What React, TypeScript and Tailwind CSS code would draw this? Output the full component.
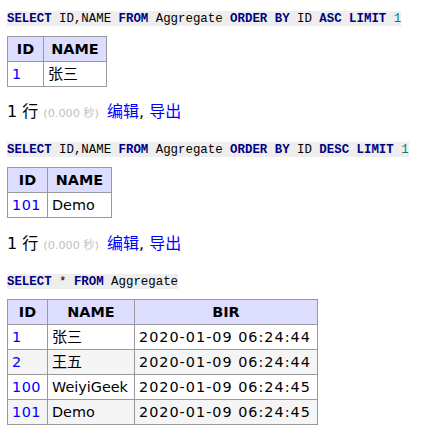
import React from "react";

type Part = [string, "kw" | "num" | ""];

const Sql = ({ parts, className }: { parts: Part[]; className: string }) => (
  <div className={`h-[15px] ${className}`}>
    <code className="inline-block h-[15px] whitespace-pre bg-[#eee] font-['Liberation_Mono',monospace] text-[12.4px] leading-[16px] text-black">
      {parts.map(([text, kind], i) =>
        kind === "kw" ? (
          <span key={i} className="font-bold text-[#000080]">
            {text}
          </span>
        ) : kind === "num" ? (
          <span key={i} className="text-[#007f7f]">
            {text}
          </span>
        ) : (
          <span key={i}>{text}</span>
        )
      )}
    </code>
  </div>
);

const Message = ({ className }: { className: string }) => (
  <p className={`h-[18px] whitespace-nowrap text-[16px] leading-[21px] text-black ${className}`}>
    1 行 <span className="text-[11.2px] text-[#c0c0c0]">(0.000 秒)</span>{" "}
    <a href="#" className="ml-[3px] text-[#00f]">编辑</a>,{" "}
    <a href="#" className="text-[#00f]">导出</a>
  </p>
);

type Cell = { text: string; kind?: "id" | "cjk" | "date" };

const HeadCell = ({ text }: { text: string }) => (
  <div className="h-[25px] border-r border-b border-[#999] bg-[#ddf] px-[4px] py-[3px] text-center font-bold leading-[18px]">
    {text}
  </div>
);

const BodyCell = ({ cell, odd }: { cell: Cell; odd: boolean }) => (
  <div
    className={`h-[25px] whitespace-nowrap border-r border-b border-[#999] px-[4px] py-[3px] leading-[18px] ${
      odd ? "bg-[#f5f5f5]" : "bg-white"
    }`}
  >
    {cell.kind === "id" ? (
      <a href="#" className="tracking-[0.5px] text-[#00f]">
        {cell.text}
      </a>
    ) : cell.kind === "cjk" ? (
      <span className="text-[15px]">{cell.text}</span>
    ) : cell.kind === "date" ? (
      <span className="tracking-[1px]">{cell.text}</span>
    ) : (
      cell.text
    )}
  </div>
);

const Grid = ({
  cols,
  heads,
  rows,
  className,
}: {
  cols: string;
  heads: string[];
  rows: Cell[][];
  className: string;
}) => (
  <div className={`grid w-fit border-l border-t border-[#999] text-[14.4px] text-black ${cols} ${className}`}>
    {heads.map((h) => (
      <HeadCell key={h} text={h} />
    ))}
    {rows.map((row, r) =>
      row.map((cell, c) => <BodyCell key={`${r}-${c}`} cell={cell} odd={r % 2 === 1} />)
    )}
  </div>
);

export default function App() {
  return (
    <div className="h-[436px] w-[424px] bg-white pl-[7px] font-['DejaVu_Sans','Noto_Sans_CJK_SC',sans-serif]">
      <Sql
        className="pt-[5px] box-content"
        parts={[
          ["SELECT", "kw"],
          [" ID,NAME ", ""],
          ["FROM", "kw"],
          [" Aggregate ", ""],
          ["ORDER", "kw"],
          [" ", ""],
          ["BY", "kw"],
          [" ID ", ""],
          ["ASC", "kw"],
          [" ", ""],
          ["LIMIT", "kw"],
          [" ", ""],
          ["1", "num"],
        ]}
      />
      <Grid
        className="mt-[16px]"
        cols="grid-cols-[36px_63px]"
        heads={["ID", "NAME"]}
        rows={[[{ text: "1", kind: "id" }, { text: "张三", kind: "cjk" }]]}
      />
      <Message className="mt-[14px]" />
      <Sql
        className="mt-[17px]"
        parts={[
          ["SELECT", "kw"],
          [" ID,NAME ", ""],
          ["FROM", "kw"],
          [" Aggregate ", ""],
          ["ORDER", "kw"],
          [" ", ""],
          ["BY", "kw"],
          [" ID ", ""],
          ["DESC", "kw"],
          [" ", ""],
          ["LIMIT", "kw"],
          [" ", ""],
          ["1", "num"],
        ]}
      />
      <Grid
        className="mt-[16px]"
        cols="grid-cols-[40px_64px]"
        heads={["ID", "NAME"]}
        rows={[[{ text: "101", kind: "id" }, { text: "Demo" }]]}
      />
      <Message className="mt-[15px]" />
      <Sql
        className="mt-[17px]"
        parts={[
          ["SELECT", "kw"],
          [" * ", ""],
          ["FROM", "kw"],
          [" Aggregate", ""],
        ]}
      />
      <Grid
        className="mt-[16px]"
        cols="grid-cols-[40px_87px_183px]"
        heads={["ID", "NAME", "BIR"]}
        rows={[
          [{ text: "1", kind: "id" }, { text: "张三", kind: "cjk" }, { text: "2020-01-09 06:24:44", kind: "date" }],
          [{ text: "2", kind: "id" }, { text: "王五", kind: "cjk" }, { text: "2020-01-09 06:24:44", kind: "date" }],
          [{ text: "100", kind: "id" }, { text: "WeiyiGeek" }, { text: "2020-01-09 06:24:45", kind: "date" }],
          [{ text: "101", kind: "id" }, { text: "Demo" }, { text: "2020-01-09 06:24:45", kind: "date" }],
        ]}
      />
    </div>
  );
}
